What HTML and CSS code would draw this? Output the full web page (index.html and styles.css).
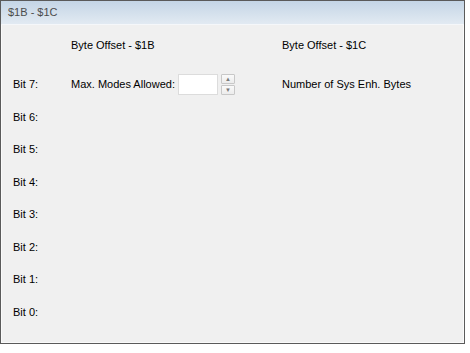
FILE: index.html
```html
<!DOCTYPE html>
<html lang="en">
<head>
  <meta charset="UTF-8" />
  <title>$1B - $1C</title>
  <link rel="stylesheet" href="styles.css">
</head>
<body>

  <div class="panel">
    <div class="panel-title">$1B - $1C</div>

    <div class="panel-body">
      <div class="row header">
        <span class="bit"></span>
        <span class="col-b">Byte Offset - $1B</span>
        <span class="col-c">Byte Offset - $1C</span>
      </div>

      <div class="row">
        <span class="bit">Bit 7:</span>
        <span class="col-b field">
          <label for="max_modes">Max. Modes Allowed:</label>
          <input id="max_modes" type="text">
          <span class="spin">
            <button class="spin-btn">&#9650;</button>
            <button class="spin-btn">&#9660;</button>
          </span>
        </span>
        <span class="col-c">Number of Sys Enh. Bytes</span>
      </div>

      <div class="row"><span class="bit">Bit 6:</span></div>
      <div class="row"><span class="bit">Bit 5:</span></div>
      <div class="row"><span class="bit">Bit 4:</span></div>
      <div class="row"><span class="bit">Bit 3:</span></div>
      <div class="row"><span class="bit">Bit 2:</span></div>
      <div class="row"><span class="bit">Bit 1:</span></div>
      <div class="row"><span class="bit">Bit 0:</span></div>
    </div>
  </div>

</body>
</html>
```

FILE: styles.css
```css
body {
  margin: 0;
  background-color: #fff;
  font-family: "Liberation Sans", Arial, sans-serif;
  font-size: 11px;
  color: #000;
}

.panel {
  width: 463px;
  height: 342px;
  border: 1px solid #5a5a5a;
  background-color: #f0f0f0;
  box-shadow: inset 0 0 0 1px #fafafa;
}

.panel-title {
  height: 23px;
  line-height: 23px;
  padding-left: 7px;
  color: #4c4c4c;
  background: linear-gradient(to bottom, #c4d5e6, #e2eaf2);
  border-bottom: 1px solid #f5f7fa;
}

.panel-body {
  padding-top: 4px;
}

.row {
  display: grid;
  grid-template-columns: 58px 211px 1fr;
  align-items: center;
  height: 32.5px;
  padding-left: 12px;
}

.row.header {
  margin-bottom: 6.5px;
}

.field {
  display: flex;
  align-items: center;
}

.field label {
  margin-right: 3px;
}

.field input {
  width: 38px;
  height: 19px;
  padding: 0;
  margin: 0;
  border: 1px solid #dcdcdc;
  background-color: #fff;
}

.spin {
  display: flex;
  flex-direction: column;
  gap: 1px;
  margin-left: 3px;
}

.spin-btn {
  width: 14px;
  height: 10px;
  padding: 0;
  border: 1px solid #c8c8c8;
  border-radius: 1px;
  background: linear-gradient(to bottom, #fafafa, #ececec);
  color: #7a7a7a;
  font-size: 6px;
  line-height: 8px;
}
```
